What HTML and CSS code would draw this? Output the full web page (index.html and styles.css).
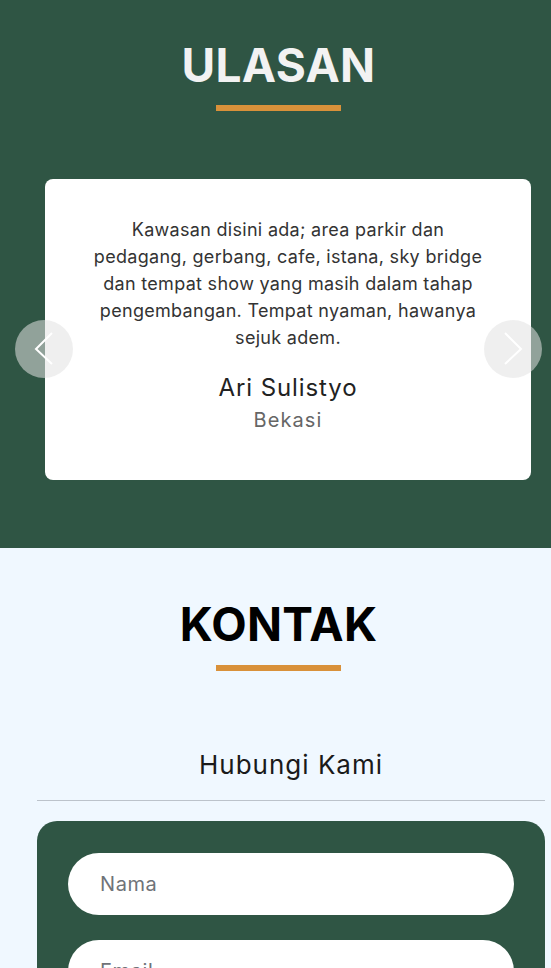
FILE: index.html
```html
<!DOCTYPE html>
<html lang="id">
<head>
<meta charset="utf-8">
<title>Ulasan &amp; Kontak</title>
<link rel="stylesheet" href="styles.css">
</head>
<body>
<section class="reviews">
  <div class="heading">
    <h2 class="title title-light">ULASAN</h2>
    <div class="bar"></div>
  </div>
  <div class="carousel">
    <button class="nav nav-prev" aria-label="Sebelumnya">
      <svg width="58" height="58" viewBox="0 0 58 58"><polyline points="37,13 21,29 37,44" fill="none" stroke="#fff" stroke-width="2"/></svg>
    </button>
    <div class="card">
      <p class="quote">Kawasan disini ada; area parkir dan pedagang, gerbang, cafe, istana, sky bridge dan tempat show yang masih dalam tahap pengembangan. Tempat nyaman, hawanya sejuk adem.</p>
      <h3 class="name">Ari Sulistyo</h3>
      <div class="city">Bekasi</div>
    </div>
    <button class="nav nav-next" aria-label="Berikutnya">
      <svg width="58" height="58" viewBox="0 0 58 58"><polyline points="21,13 37,29 21,44" fill="none" stroke="#fff" stroke-width="2"/></svg>
    </button>
  </div>
</section>
<section class="contact">
  <div class="heading">
    <h2 class="title title-dark">KONTAK</h2>
    <div class="bar bar-contact"></div>
  </div>
  <div class="contact-box">
    <h4 class="subtitle">Hubungi Kami</h4>
    <hr class="rule">
    <form class="form-card">
      <input class="field" type="text" placeholder="Nama">
      <input class="field" type="email" placeholder="Email">
    </form>
  </div>
</section>
</body>
</html>
```
FILE: styles.css
```css
* { box-sizing: border-box; }
html, body {
  margin: 0;
  padding: 0;
  overflow: hidden;
}
body {
  font-family: Inter, "Open Sans", sans-serif;
  background: #f0f8ff;
}
.reviews {
  background: #2f5544;
  padding: 38px 0 68px;
}
.heading {
  display: flex;
  flex-direction: column;
  align-items: center;
  padding-left: 6px;
}
.title {
  margin: 0;
  font-size: 46px;
  line-height: 1.2;
  font-weight: 700;
  letter-spacing: 0.3px;
}
.title-light { color: #f2f2f2; }
.title-dark { color: #000; }
.bar {
  width: 125px;
  height: 6px;
  background: #d9913a;
  margin-top: 12px;
}
.bar-contact { margin-top: 13px; }
.carousel {
  position: relative;
  margin-top: 68px;
}
.card {
  margin-left: 45px;
  width: 486px;
  background: #fff;
  border-radius: 8px;
  padding: 37px 46px 48px;
  text-align: center;
}
.quote {
  margin: 0;
  font-size: 18px;
  line-height: 27px;
  letter-spacing: 0.3px;
  color: #333;
}
.name {
  margin: 23px 0 0;
  font-size: 24px;
  line-height: 28.8px;
  font-weight: 400;
  letter-spacing: 0.9px;
  color: #222;
}
.city {
  margin-top: 5px;
  font-size: 20px;
  line-height: 24px;
  letter-spacing: 1.1px;
  color: #666;
}
.nav {
  position: absolute;
  top: 141px;
  width: 58px;
  height: 58px;
  padding: 0;
  border: none;
  border-radius: 50%;
  background: rgba(225, 225, 225, 0.55);
  cursor: pointer;
}
.nav svg { display: block; }
.nav-prev { left: 15px; }
.nav-next { left: 484px; }
.contact {
  padding-top: 49px;
}
.contact-box {
  margin-left: 37px;
  width: 508px;
  margin-top: 78px;
}
.subtitle {
  margin: 0;
  text-align: center;
  font-size: 26px;
  line-height: 31.2px;
  font-weight: 400;
  letter-spacing: 1px;
  color: #1a1a1a;
}
.rule {
  margin: 20px 0 0;
  border: none;
  border-top: 1px solid #bcc3cb;
}
.form-card {
  margin-top: 20px;
  background: #2f5544;
  border-radius: 20px;
  padding: 32px 31px 40px;
  display: flex;
  flex-direction: column;
  gap: 25px;
}
.field {
  height: 62px;
  border: none;
  border-radius: 31px;
  background: #fff;
  padding: 0 32px;
  font-family: inherit;
  font-size: 20px;
  letter-spacing: 0.6px;
  color: #333;
  outline: none;
}
.field::placeholder { color: #6f7378; }
```
